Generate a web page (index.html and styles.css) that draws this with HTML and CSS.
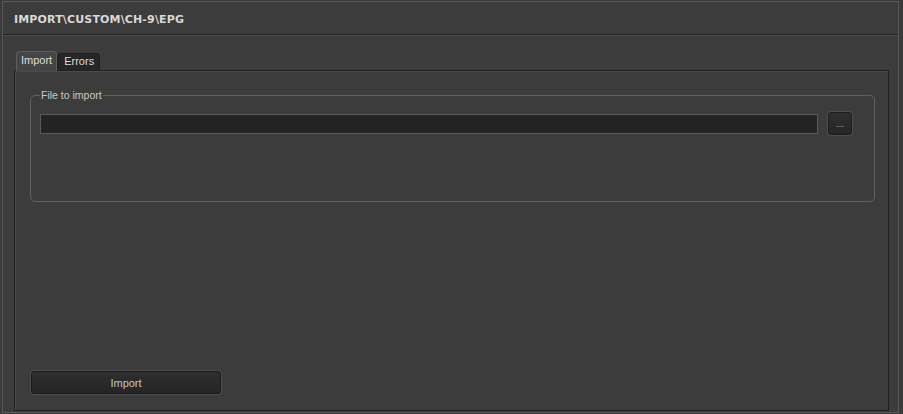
FILE: index.html
```html
<!DOCTYPE html>
<html lang="en">
<head>
    <meta charset="UTF-8">
    <title>Import - CH-9 EPG</title>
    <link rel="stylesheet" href="styles.css">
</head>
<body>
    <div class="window">
        <div class="header">
            <h1 class="title">IMPORT\CUSTOM\CH-9\EPG</h1>
        </div>

        <div class="body">
            <div class="tabs">
                <div class="tab active">Import</div>
                <div class="tab">Errors</div>
            </div>

            <div class="panel">
                <fieldset class="group">
                    <legend>File to import</legend>
                    <div class="file-row">
                        <input type="text" class="file-input">
                        <button class="browse-btn">...</button>
                    </div>
                </fieldset>

                <div class="spacer"></div>

                <button class="btn">Import</button>
            </div>
        </div>
    </div>
</body>
</html>
```

FILE: styles.css
```css
* {
    box-sizing: border-box;
    margin: 0;
    padding: 0;
}

body {
    background: #3a3a3a;
    font-family: Tahoma, 'DejaVu Sans', sans-serif;
    font-size: 11px;
    color: #d4d4d4;
    width: 903px;
    height: 414px;
    overflow: hidden;
}

.window {
    margin: 1px 0 0 2px;
    width: 897px;
    height: 412px;
    border: 1px solid #585858;
    background: #3c3c3c;
    display: flex;
    flex-direction: column;
}

.header {
    height: 33px;
    border-bottom: 1px solid #242424;
    box-shadow: 0 1px 0 #4c4c4c;
    padding: 11px 0 0 11px;
}

.title {
    font-family: 'DejaVu Sans', sans-serif;
    font-weight: bold;
    font-size: 11px;
    letter-spacing: 0.15px;
    color: #d8d8d8;
}

.body {
    flex: 1;
    display: flex;
    flex-direction: column;
    padding: 16px 9px 1px 11px;
}

.tabs {
    display: flex;
    align-items: flex-end;
    height: 19px;
    padding-left: 2px;
}

.tab {
    height: 17px;
    padding: 1px 5px 0 6px;
    background: #262626;
    border: 1px solid #1e1e1e;
    border-bottom: none;
    border-radius: 4px 4px 0 0;
    color: #dcdcdc;
    font-family: 'Liberation Sans', sans-serif;
    font-size: 11px;
}

.tab.active {
    height: 20px;
    margin-bottom: -1px;
    padding: 2px 4px 0 4px;
    background: #454545;
    border-color: #5e5e5e;
    position: relative;
    z-index: 1;
}

.panel {
    flex: 1;
    display: flex;
    flex-direction: column;
    background: #3c3c3c;
    border: 1px solid #202020;
    box-shadow: inset 1px 1px 0 #4a4a4a;
    padding: 18px 13px 16px 15px;
}

.group {
    height: 113px;
    border: 1px solid #606060;
    border-radius: 5px;
    padding: 11px 22px 0 9px;
}

.group legend {
    margin-left: 0;
    padding: 0 1px;
    color: #c8c8c8;
    font-family: 'Liberation Sans', sans-serif;
    font-size: 10.5px;
}

.file-row {
    display: flex;
    align-items: center;
    gap: 10px;
}

.file-input {
    flex: 1;
    height: 20px;
    background: #232323;
    border: 1px solid #5a5a5a;
    outline: none;
    color: #ddd;
}

.browse-btn {
    width: 24px;
    height: 23px;
    background: linear-gradient(#2f2f2f, #262626);
    border: 1px solid #1c1c1c;
    border-radius: 3px;
    box-shadow: 0 0 0 1px #4e4e4e;
    color: #bbb;
    font-size: 9px;
    line-height: 16px;
}

.spacer {
    flex: 1;
}

.btn {
    width: 190px;
    height: 23px;
    margin-left: 1px;
    background: linear-gradient(#2f2f2f, #252525);
    border: 1px solid #1a1a1a;
    border-radius: 3px;
    box-shadow: 0 0 0 1px #4e4e4e;
    color: #c4c4c4;
    font-family: 'Liberation Sans', sans-serif;
    font-size: 11px;
}
```
